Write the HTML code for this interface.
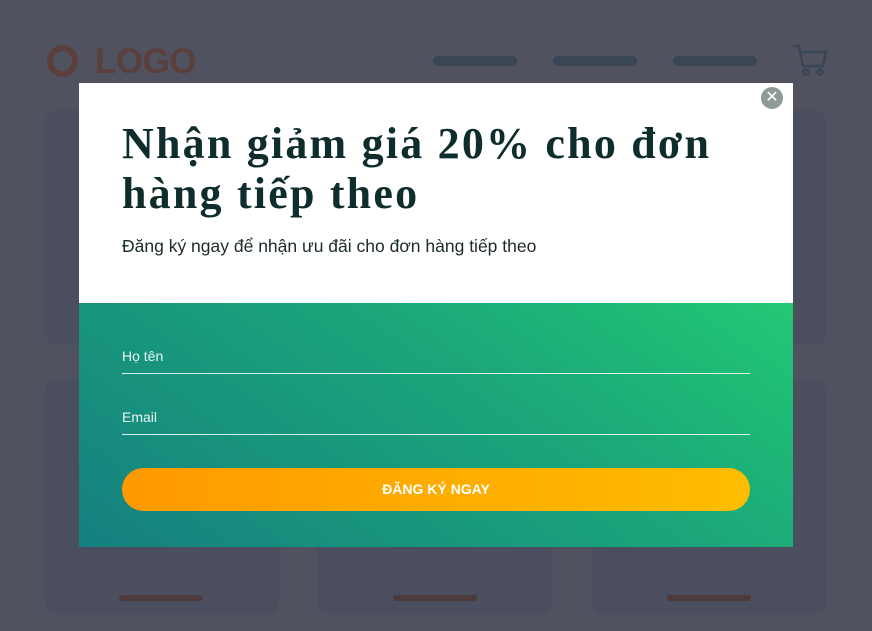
<!DOCTYPE html>
<html><head><meta charset="utf-8"><style>
body{margin:0;width:872px;height:631px;background:#50535f;position:relative;overflow:hidden;font-family:"Liberation Sans",sans-serif}
.card{position:absolute;background:#4a4e5e;border-radius:12px;width:234px}
.bar{position:absolute;height:6px;border-radius:3px}
.nav{background:#3a4556;top:56px;width:84px;height:10px;border-radius:5px;position:absolute}
.modal{position:absolute;left:79px;top:83px;width:714px;height:464px;background:#fff;overflow:hidden}
.top{height:220px;position:relative}
h1{position:absolute;left:43px;top:36px;margin:0;font-family:"Liberation Serif","DejaVu Serif",serif;font-weight:bold;font-size:44px;line-height:50px;color:#0e2d2c;letter-spacing:2.2px}
.sub{position:absolute;left:43px;top:153px;font-size:17.5px;color:#1d2b2b}
.bot{position:absolute;left:0;top:220px;width:714px;height:244px;background:linear-gradient(215deg,#22c874 0%,#1ba67a 40%,#158080 100%)}
.lbl{position:absolute;left:43px;color:#e8f6f0;font-size:14px}
.line{position:absolute;left:43px;width:628px;height:1px;background:#d8eee6}
.btn{position:absolute;left:43px;top:165px;width:628px;height:43px;border-radius:22px;background:linear-gradient(90deg,#ff9a00,#ffbd00);color:#fff;font-weight:bold;font-size:14px;text-align:center;line-height:43px}
.close{position:absolute;left:682px;top:4px;width:22px;height:22px;border-radius:50%;background:#8e9a98;color:#fff;text-align:center;line-height:22px;font-size:16px}
</style></head><body>
<div class="card" style="left:45px;top:110px;height:235px"></div>
<div class="card" style="left:592px;top:110px;height:235px"></div>
<div class="card" style="left:45px;top:380px;height:234px"></div>
<div class="card" style="left:318px;top:380px;height:234px"></div>
<div class="card" style="left:592px;top:380px;height:234px"></div>
<div class="bar" style="left:119px;top:595px;width:84px;background:#4e3a3a"></div>
<div class="bar" style="left:393px;top:595px;width:84px;background:#4e3a3a"></div>
<div class="bar" style="left:667px;top:595px;width:84px;background:#4e3a3a"></div>
<div style="position:absolute;left:47px;top:45px;width:31px;height:32px;border:6px solid #5a3f3d;border-radius:50%;box-sizing:border-box"></div>
<div style="position:absolute;left:95px;top:42px;font-size:35px;font-weight:bold;color:#5a3f3d;letter-spacing:-0.5px">LOGO</div>
<div class="nav" style="left:433px"></div><div class="nav" style="left:553px"></div><div class="nav" style="left:673px"></div>
<svg style="position:absolute;left:792px;top:44px" width="36" height="32" viewBox="0 0 36 32" fill="none" stroke="#3a4556" stroke-width="2.5"><path d="M1 2h6l4 20h20l3-14H9"/><circle cx="14" cy="28" r="2.5"/><circle cx="28" cy="28" r="2.5"/></svg>
<div class="modal">
<div class="top">
<div class="close">✕</div>
<h1>Nhận giảm giá 20% cho đơn<br>hàng tiếp theo</h1>
<div class="sub">Đăng ký ngay để nhận ưu đãi cho đơn hàng tiếp theo</div>
</div>
<div class="bot">
<div class="lbl" style="top:45px">Họ tên</div><div class="line" style="top:70px"></div>
<div class="lbl" style="top:106px">Email</div><div class="line" style="top:131px"></div>
<div class="btn">ĐĂNG KÝ NGAY</div>
</div>
</div>
</body></html>
